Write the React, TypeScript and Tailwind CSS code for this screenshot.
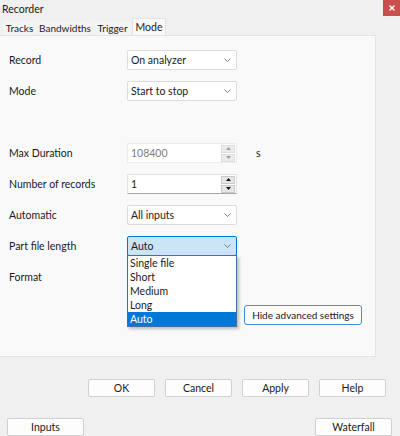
const FONT = { fontFamily: 'Lato, "Segoe UI", "Noto Sans", sans-serif' };

function Chevron() {
  return (
    <svg width="7" height="4" viewBox="0 0 7 4" className="mr-[5px]">
      <path d="M0.5 0.5L3.5 3.5L6.5 0.5" fill="none" stroke="#707070" strokeWidth="0.9" />
    </svg>
  );
}

function Select({ value, focused }: { value: string; focused?: boolean }) {
  return (
    <div
      className={
        focused
          ? 'flex h-[20px] w-[110px] items-center justify-between rounded-[2px] border border-[#0078d7] bg-[#cce4f7] pl-[3px] text-[#1a1a1a]'
          : 'flex h-[20px] w-[110px] items-center justify-between rounded-[2px] border border-[#dcdcdc] bg-white pl-[3px] text-[#1a1a1a]'
      }
    >
      <span>{value}</span>
      <Chevron />
    </div>
  );
}

function Tri({ up, color }: { up?: boolean; color: string }) {
  return (
    <svg width="5" height="3" viewBox="0 0 5 3">
      <path d={up ? 'M0 3L2.5 0L5 3Z' : 'M0 0L2.5 3L5 0Z'} fill={color} />
    </svg>
  );
}

function Spin({ value, disabled }: { value: string; disabled?: boolean }) {
  const c = disabled ? '#a0a0a0' : '#111111';
  const box = disabled
    ? 'flex h-[8px] items-center justify-center border border-[#dedede] bg-[#ebebeb]'
    : 'flex h-[8px] items-center justify-center border border-[#c9c9c9] bg-[#e6e6e6]';
  return (
    <div
      className={
        disabled
          ? 'flex h-[20px] w-[110px] items-center justify-between border border-[#ececec] bg-white pl-[3px] text-[#7d7d7d]'
          : 'flex h-[20px] w-[110px] items-center justify-between border border-[#e2e2e2] border-b-[#a8a8a8] bg-white pl-[3px] text-[#1a1a1a]'
      }
    >
      <span>{value}</span>
      <div className="mr-[1px] flex w-[14px] flex-col gap-[1px]">
        <div className={box}>
          <Tri up color={c} />
        </div>
        <div className={box}>
          <Tri color={c} />
        </div>
      </div>
    </div>
  );
}

function Row({ label, children }: { label: string; children?: React.ReactNode }) {
  return (
    <div className="flex h-[20px] items-center">
      <div className="w-[127px] pl-[9px] text-[#1a1a1a]">{label}</div>
      {children}
    </div>
  );
}

function Btn({ label, w = 'w-[67px]' }: { label: string; w?: string }) {
  return (
    <div
      className={`flex h-[18px] ${w} items-center justify-center rounded-[2px] border border-[#d0d0d0] bg-[#fdfdfd] text-[#1a1a1a]`}
    >
      {label}
    </div>
  );
}

export default function App() {
  return (
    <div className="relative h-[436px] w-[400px] overflow-hidden bg-[#f0f0f0] text-[10.5px] leading-[14px]" style={FONT}>
      {/* title bar */}
      <div className="flex h-[19px] items-start justify-between">
        <span className="pl-[2px] pt-[2px] text-[10.5px] text-[#1a1a1a]">Recorder</span>
        <div className="flex h-[16px] w-[17px] items-center justify-center bg-[#cb4e4e]">
          <svg width="6" height="6" viewBox="0 0 6 6">
            <path d="M0.5 0.5L5.5 5.5M5.5 0.5L0.5 5.5" stroke="white" strokeWidth="1.3" />
          </svg>
        </div>
      </div>

      {/* tabs */}
      <div className="flex h-[16px] items-end pl-[3px] text-[10px] text-[#1a1a1a]">
        <div className="flex h-[14px] w-[33px] items-center justify-center bg-[#f4f4f4]">Tracks</div>
        <div className="ml-[2px] flex h-[14px] w-[54px] items-center justify-center bg-[#f4f4f4]">Bandwidths</div>
        <div className="ml-[2px] flex h-[14px] w-[37px] items-center justify-center bg-[#f4f4f4]">Trigger</div>
        <div className="ml-[1px] flex h-[17px] w-[34px] items-center justify-center border-x border-t border-[#e3e3e3] bg-[#f9f9f9] text-[10.5px]">
          Mode
        </div>
      </div>

      {/* panel */}
      <div className="relative h-[322px] w-[376px] border-r border-b border-t border-[#e3e3e3] bg-[#f9f9f9]">
        <div className="flex flex-col gap-[11px] pt-[14px]">
          <Row label="Record">
            <Select value="On analyzer" />
          </Row>
          <Row label="Mode">
            <Select value="Start to stop" />
          </Row>
          <Row label="" />
          <Row label="Max Duration">
            <Spin value="108400" disabled />
            <span className="ml-[19px] text-[#1a1a1a]">s</span>
          </Row>
          <Row label="Number of records">
            <Spin value="1" />
          </Row>
          <Row label="Automatic">
            <Select value="All inputs" />
          </Row>
          <Row label="Part file length">
            <Select value="Auto" focused />
          </Row>
          <Row label="Format" />
        </div>

        <div className="ml-[244px] mt-[18px] flex h-[20px] w-[118px] items-center justify-center rounded-[3px] border border-[#3d8fdb] bg-[#fdfdfd] text-[10px] text-[#1a1a1a]">
          Hide advanced settings
        </div>

        {/* open dropdown list */}
        <div className="absolute left-[127px] top-[219px] w-[110px] border border-[#4a6f9a] bg-white text-[#1a1a1a] shadow-[2px_2px_3px_rgba(0,0,0,0.25)]">
          <div className="h-[14px] pl-[2px] leading-[14px]">Single file</div>
          <div className="h-[14px] pl-[2px] leading-[14px]">Short</div>
          <div className="h-[14px] pl-[2px] leading-[14px]">Medium</div>
          <div className="h-[14px] pl-[2px] leading-[14px]">Long</div>
          <div className="h-[14px] bg-[#0078d7] pl-[2px] leading-[14px] text-white">Auto</div>
        </div>
      </div>

      {/* dialog buttons */}
      <div className="mt-[22px] flex justify-end gap-[10px] pr-[14px]">
        <Btn label="OK" />
        <Btn label="Cancel" />
        <Btn label="Apply" />
        <Btn label="Help" />
      </div>

      <div className="mt-[21px] flex justify-between pl-[7px] pr-[8px]">
        <Btn label="Inputs" w="w-[77px]" />
        <Btn label="Waterfall" w="w-[77px]" />
      </div>
    </div>
  );
}
